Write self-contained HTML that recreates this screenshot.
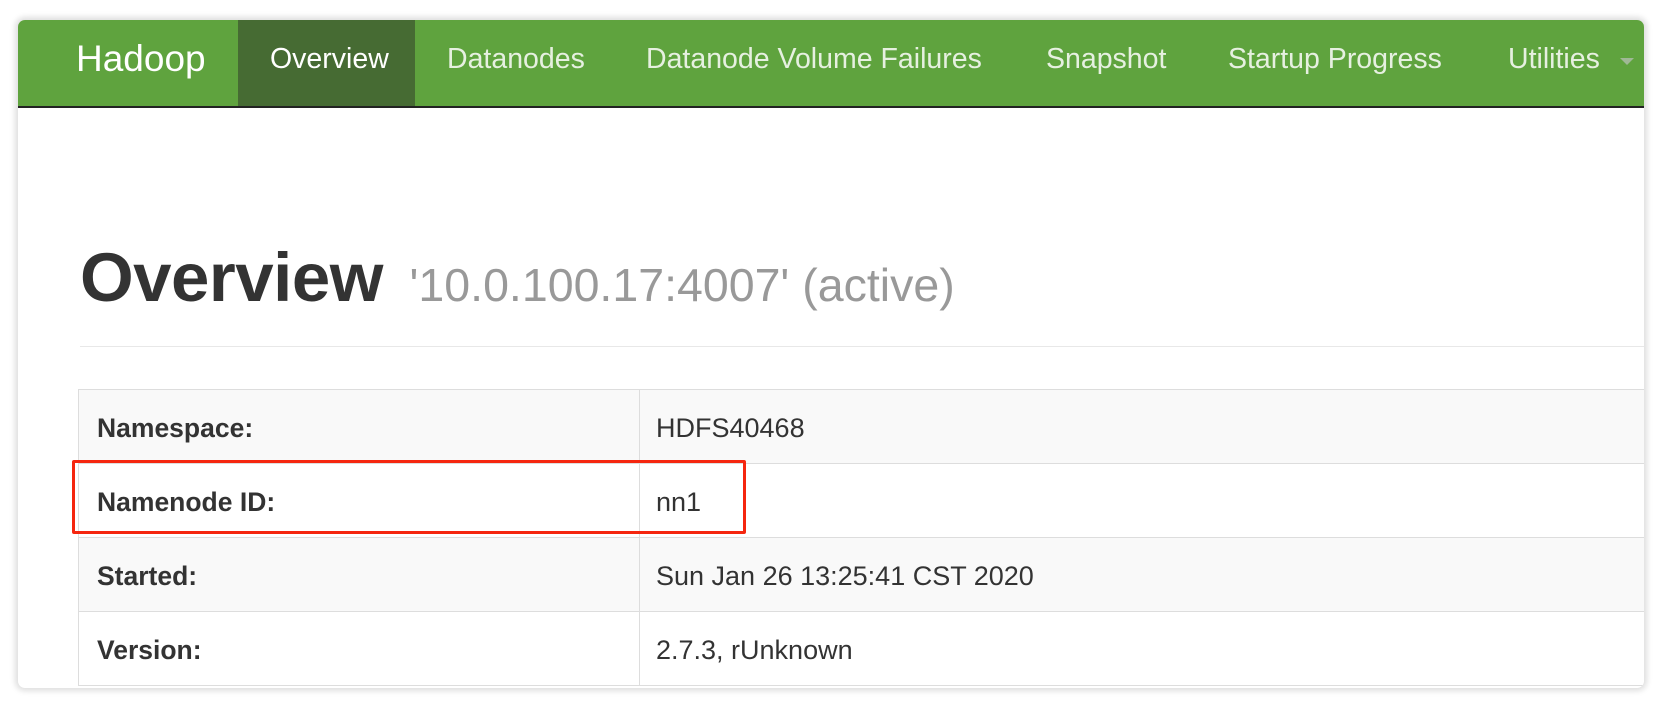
<!DOCTYPE html>
<html><head><meta charset="utf-8"><style>
*{margin:0;padding:0;box-sizing:border-box}
body{width:1664px;height:708px;background:#fff;position:relative;overflow:hidden;font-family:"Liberation Sans",Arial,sans-serif}
.win{position:absolute;left:18px;top:20px;width:1626px;height:668px;border-radius:7px;overflow:hidden;background:#fff;box-shadow:0 0 6px 3px rgba(0,0,0,0.13)}
.nav{position:absolute;left:0;top:0;width:100%;height:88px;background:#5fa33e;border-bottom:2px solid #222}
.nav span{position:absolute;top:0;height:86px;line-height:78px;font-size:28.5px;color:#e6f0e0;white-space:nowrap}
.act{position:absolute;left:220px;top:0;width:177px;height:86px;background:#466b33}
.caret{position:absolute;left:1602px;top:38px;width:0;height:0;border-left:7px solid transparent;border-right:7px solid transparent;border-top:7px solid #9fb895}
h1{position:absolute;left:62px;top:218px;font-size:69px;font-weight:bold;color:#333;white-space:nowrap;letter-spacing:-0.5px}
h1 small{font-size:46.5px;font-weight:normal;color:#999;letter-spacing:0;margin-left:8px}
.hr{position:absolute;left:62px;top:326px;right:0;height:1px;background:#e8e8e8}
table{position:absolute;left:60px;top:369px;width:1600px;border-collapse:collapse}
td{height:74px;border:1px solid #ddd;font-size:27px;color:#333;padding-left:16px;padding-top:4px;vertical-align:middle}
td:first-child{width:561px;font-weight:bold;font-size:26.5px;padding-left:18px}
tr:nth-child(odd) td{background:#f9f9f9}
.red{position:absolute;left:54px;top:440px;width:674px;height:74px;border:3px solid #f5260f;border-radius:2px}
</style></head><body>
<div class="win">
<div class="nav">
<div class="act"></div>
<span style="left:58px;font-size:37px;color:#fff">Hadoop</span>
<span style="left:252px;color:#fff">Overview</span>
<span style="left:429px">Datanodes</span>
<span style="left:628px">Datanode Volume Failures</span>
<span style="left:1028px">Snapshot</span>
<span style="left:1210px">Startup Progress</span>
<span style="left:1490px">Utilities</span>
<div class="caret"></div>
</div>
<h1>Overview <small>'10.0.100.17:4007' (active)</small></h1>
<div class="hr"></div>
<table>
<tr><td>Namespace:</td><td>HDFS40468</td></tr>
<tr><td>Namenode ID:</td><td>nn1</td></tr>
<tr><td>Started:</td><td>Sun Jan 26 13:25:41 CST 2020</td></tr>
<tr><td>Version:</td><td>2.7.3, rUnknown</td></tr>
</table>
<div class="red"></div>
</div>
</body></html>
